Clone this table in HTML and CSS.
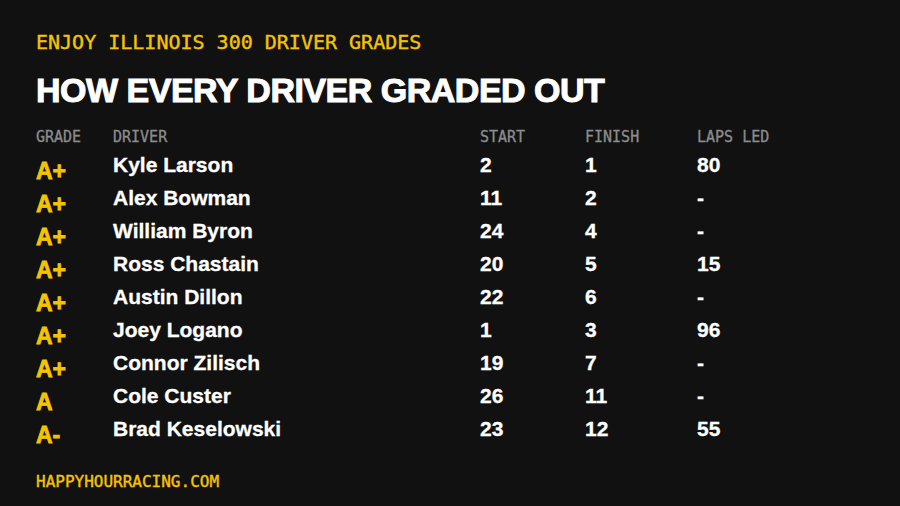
FILE: index.html
```html
<!DOCTYPE html>
<html>
<head>
<meta charset="utf-8">
<link rel="stylesheet" href="styles.css">
</head>
<body>
<div class="page">
  <div class="kicker">ENJOY ILLINOIS 300 DRIVER GRADES</div>
  <h1 class="title">HOW EVERY DRIVER GRADED OUT</h1>
  <div class="table">
    <div class="row head">
      <div>GRADE</div><div>DRIVER</div><div>START</div><div>FINISH</div><div>LAPS LED</div>
    </div>
    <div class="row"><div class="grade">A+</div><div class="cell">Kyle Larson</div><div class="cell">2</div><div class="cell">1</div><div class="cell">80</div></div>
    <div class="row"><div class="grade">A+</div><div class="cell">Alex Bowman</div><div class="cell">11</div><div class="cell">2</div><div class="cell">-</div></div>
    <div class="row"><div class="grade">A+</div><div class="cell">William Byron</div><div class="cell">24</div><div class="cell">4</div><div class="cell">-</div></div>
    <div class="row"><div class="grade">A+</div><div class="cell">Ross Chastain</div><div class="cell">20</div><div class="cell">5</div><div class="cell">15</div></div>
    <div class="row"><div class="grade">A+</div><div class="cell">Austin Dillon</div><div class="cell">22</div><div class="cell">6</div><div class="cell">-</div></div>
    <div class="row"><div class="grade">A+</div><div class="cell">Joey Logano</div><div class="cell">1</div><div class="cell">3</div><div class="cell">96</div></div>
    <div class="row"><div class="grade">A+</div><div class="cell">Connor Zilisch</div><div class="cell">19</div><div class="cell">7</div><div class="cell">-</div></div>
    <div class="row"><div class="grade">A</div><div class="cell">Cole Custer</div><div class="cell">26</div><div class="cell">11</div><div class="cell">-</div></div>
    <div class="row"><div class="grade">A-</div><div class="cell">Brad Keselowski</div><div class="cell">23</div><div class="cell">12</div><div class="cell">55</div></div>
  </div>
  <div class="footer">HAPPYHOURRACING.COM</div>
</div>
</body>
</html>
```
FILE: styles.css
```css
html, body {
  margin: 0;
  padding: 0;
  background: #111111;
}
.page {
  width: 900px;
  height: 506px;
  box-sizing: border-box;
  padding: 30px 36px 0 36px;
  background: #111111;
  color: #ffffff;
  font-family: "Liberation Sans", Arial, sans-serif;
}
.kicker {
  font-family: "DejaVu Sans Mono", "Liberation Mono", monospace;
  font-size: 20px;
  line-height: 24px;
  color: #f5c400;
  letter-spacing: 0;
  -webkit-text-stroke: 0.4px #f5c400;
}
.title {
  margin: 16px 0 0 0;
  font-size: 34px;
  line-height: 40px;
  font-weight: 700;
  color: #ffffff;
  -webkit-text-stroke: 1px #ffffff;
  letter-spacing: -0.5px;
}
.table {
  margin-top: 16px;
}
.row {
  display: grid;
  grid-template-columns: 77px 367px 105px 112px 1fr;
  align-items: center;
  height: 33px;
}
.row.head {
  height: 22px;
  font-family: "DejaVu Sans Mono", "Liberation Mono", monospace;
  font-size: 15px;
  color: #8c8c8c;
  letter-spacing: 0;
  -webkit-text-stroke: 0.3px #8c8c8c;
}
.cell {
  font-size: 21px;
  line-height: 24px;
  font-weight: 700;
  color: #ffffff;
  -webkit-text-stroke: 0.3px #ffffff;
}
.grade {
  align-self: end;
  font-size: 23px;
  line-height: 19px;
  font-weight: 700;
  color: #f5c400;
  -webkit-text-stroke: 0.8px #f5c400;
}
.footer {
  margin-top: 27px;
  font-family: "DejaVu Sans Mono", "Liberation Mono", monospace;
  font-size: 16px;
  color: #f5c400;
  letter-spacing: 0;
  -webkit-text-stroke: 0.4px #f5c400;
}
```
